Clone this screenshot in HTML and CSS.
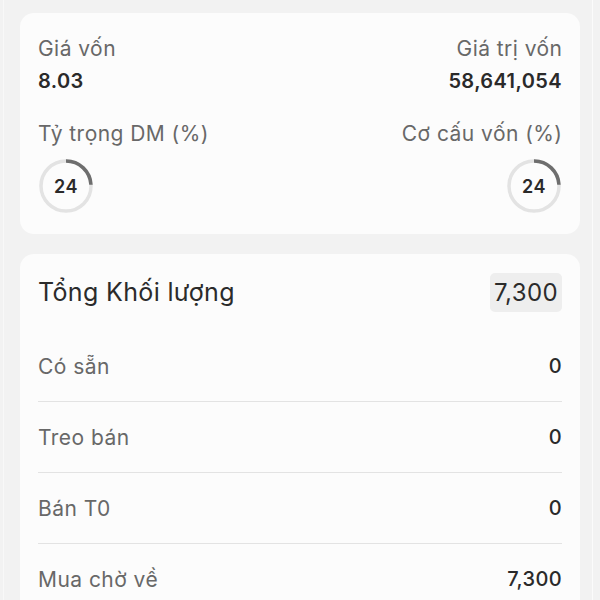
FILE: index.html
```html
<!DOCTYPE html>
<html lang="vi">
<head>
<meta charset="utf-8">
<link rel="stylesheet" href="styles.css">
</head>
<body>
<div class="frame">
  <section class="card summary">
    <div class="grid">
      <div class="cell">
        <div class="label">Giá vốn</div>
        <div class="value">8.03</div>
      </div>
      <div class="cell right">
        <div class="label">Giá trị vốn</div>
        <div class="value">58,641,054</div>
      </div>
      <div class="cell">
        <div class="label">Tỷ trọng DM (%)</div>
        <div class="ring">
          <svg width="56" height="56" viewBox="0 0 56 56">
            <circle cx="28" cy="28" r="25" fill="none" stroke="#e3e3e3" stroke-width="3.5"/>
            <circle cx="28" cy="28" r="25" fill="none" stroke="#6e6e6e" stroke-width="3.5" stroke-dasharray="37.7 157.08" transform="rotate(-90 28 28)"/>
          </svg>
          <span class="ring-num">24</span>
        </div>
      </div>
      <div class="cell right">
        <div class="label">Cơ cấu vốn (%)</div>
        <div class="ring">
          <svg width="56" height="56" viewBox="0 0 56 56">
            <circle cx="28" cy="28" r="25" fill="none" stroke="#e3e3e3" stroke-width="3.5"/>
            <circle cx="28" cy="28" r="25" fill="none" stroke="#6e6e6e" stroke-width="3.5" stroke-dasharray="37.7 157.08" transform="rotate(-90 28 28)"/>
          </svg>
          <span class="ring-num">24</span>
        </div>
      </div>
    </div>
  </section>

  <section class="card volume">
    <div class="head">
      <span class="head-title">Tổng Khối lượng</span>
      <span class="head-value">7,300</span>
    </div>
    <div class="row"><span class="row-label">Có sẵn</span><span class="row-value">0</span></div>
    <div class="row"><span class="row-label">Treo bán</span><span class="row-value">0</span></div>
    <div class="row"><span class="row-label">Bán T0</span><span class="row-value">0</span></div>
    <div class="row"><span class="row-label">Mua chờ về</span><span class="row-value">7,300</span></div>
  </section>
</div>
</body>
</html>
```

FILE: styles.css
```css
* { box-sizing: border-box; }
html, body { margin: 0; padding: 0; }
body {
  background: #f2f2f2;
  font-family: Inter, "Noto Sans", sans-serif;
  color: #2b2b2b;
  height: 600px;
  overflow: hidden;
}
.frame {
  margin: 0 7px 0 3px;
  border-left: 1px solid #f8f8f8;
  border-right: 1px solid #fbfbfb;
  padding: 13px 11px 0 16px;
  display: flex;
  flex-direction: column;
  gap: 20px;
  min-height: 600px;
}
.card {
  background: #fcfcfc;
  border-radius: 14px;
  width: 560px;
}
.summary { padding: 23px 18px 20px; }
.grid {
  display: grid;
  grid-template-columns: 1fr 1fr;
  row-gap: 27px;
}
.cell { display: flex; flex-direction: column; align-items: flex-start; }
.cell.right { align-items: flex-end; }
.label {
  font-size: 21px;
  line-height: 26px;
  letter-spacing: 0.45px;
  color: #686868;
}
.cell.right .label { margin-right: -0.45px; }
.value {
  margin-top: 6px;
  font-size: 20px;
  line-height: 26px;
  font-weight: 600;
  letter-spacing: 0.4px;
  color: #2a2a2a;
}
.ring {
  margin-top: 11px;
  position: relative;
  width: 56px;
  height: 56px;
}
.ring svg { display: block; }
.ring-num {
  position: absolute;
  inset: 0;
  display: flex;
  align-items: center;
  justify-content: center;
  font-size: 18px;
  font-weight: 600;
  letter-spacing: 0.5px;
  color: #2a2a2a;
}
.volume { padding: 19px 18px 0; }
.head {
  display: flex;
  justify-content: space-between;
  align-items: center;
  margin-bottom: 19px;
}
.head-title {
  font-size: 25px;
  line-height: 39px;
  letter-spacing: 0.35px;
  color: #2b2b2b;
}
.head-value {
  font-size: 24px;
  line-height: 39px;
  letter-spacing: 0.4px;
  padding: 0 4px;
  background: #eeeeee;
  border-radius: 5px;
  color: #2b2b2b;
}
.row {
  height: 71px;
  display: flex;
  justify-content: space-between;
  align-items: center;
  border-bottom: 1px solid #e3e3e3;
}
.row-label { font-size: 21px; letter-spacing: 0.45px; color: #686868; }
.row-value { font-size: 20px; font-weight: 500; letter-spacing: 0.4px; color: #2a2a2a; }
```
